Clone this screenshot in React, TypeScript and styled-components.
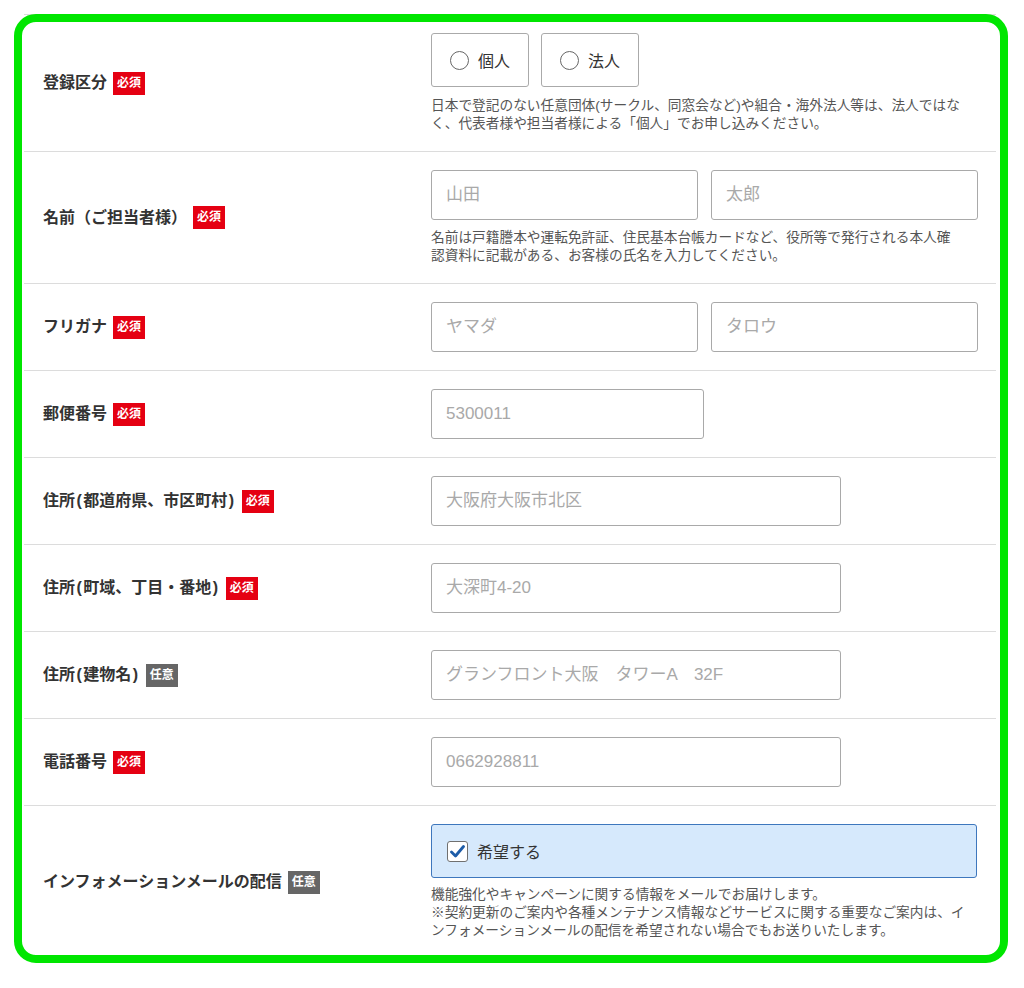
import React from "react";
import styled, { createGlobalStyle } from "styled-components";

const FONT = `"Liberation Sans", "Noto Sans CJK JP", "Noto Sans", sans-serif`;

const Global = createGlobalStyle`
  html, body { margin: 0; padding: 0; background: #fff; }
  body { font-family: ${FONT}; color: #333; }
  * { box-sizing: border-box; }
`;

const Page = styled.div`
  position: relative;
  width: 1024px;
  height: 988px;
  padding: 14px 28px 0 24px;
`;

const Frame = styled.div`
  position: absolute;
  left: 14px;
  top: 14px;
  width: 994px;
  height: 949px;
  border: 8px solid #00e600;
  border-radius: 22px;
  pointer-events: none;
`;

const Table = styled.div`
  width: 972px;
  border-top: 1px solid #dcdcdc;
`;

const Row = styled.div`
  display: grid;
  grid-template-columns: 387px 1fr;
  border-bottom: 1px solid #dcdcdc;
`;

const LabelCell = styled.div`
  display: flex;
  align-items: center;
  gap: 6px;
  padding-left: 19px;
  font-size: 16px;
  font-weight: 700;
  color: #333;
  line-height: 22px;
`;

const Paren = styled.span`
  margin: 0 1.5px;
`;

const Badge = styled.span<{ $optional?: boolean }>`
  display: inline-block;
  background: ${(p) => (p.$optional ? "#666" : "#e50012")};
  color: #fff;
  font-size: 12px;
  font-weight: 700;
  line-height: 15px;
  padding: 4px 4px;
`;

const ValueCell = styled.div<{ $gap?: number }>`
  padding: 18px 19px 18px 20px;
  display: flex;
  flex-direction: column;
  gap: ${(p) => p.$gap ?? 9}px;
`;

const Inline = styled.div`
  display: flex;
  gap: 12px;
`;

const RadioBox = styled.label`
  width: 98px;
  height: 54px;
  border: 1px solid #aaa;
  border-radius: 3px;
  display: flex;
  align-items: center;
  gap: 9px;
  padding-left: 18px;
  font-size: 16px;
  color: #333;
`;

const RadioCircle = styled.span`
  width: 19px;
  height: 19px;
  border-radius: 50%;
  border: 1px solid #666;
  background: #fff;
`;

const Input = styled.input<{ $w: number }>`
  width: ${(p) => p.$w}px;
  height: 50px;
  border: 1px solid #a9a9a9;
  border-radius: 3px;
  padding: 0 14px;
  font-family: ${FONT};
  font-size: 17px;
  color: #333;
  outline: none;
  &::placeholder { color: #a9a9a9; }
`;

const InputRow = styled.div`
  display: flex;
  gap: 13px;
`;

const Help = styled.p`
  margin: 0;
  font-size: 13.7px;
  line-height: 18px;
  color: #555;
  white-space: nowrap;
`;

const CheckBox = styled.label`
  width: 546px;
  height: 54px;
  border: 1px solid #3e77bd;
  border-radius: 3px;
  background: #d6e9fc;
  display: flex;
  align-items: center;
  gap: 9px;
  padding-left: 15px;
  font-size: 16px;
  color: #333;
`;

const CheckSquare = styled.span`
  width: 21px;
  height: 21px;
  border: 1px solid #707070;
  border-radius: 3px;
  background: #fff;
  display: flex;
  align-items: center;
  justify-content: center;
`;

const Required = () => <Badge>必須</Badge>;
const Optional = () => <Badge $optional>任意</Badge>;

export default function App() {
  return (
    <Page>
      <Global />
      <Table>
        <Row>
          <LabelCell>登録区分<Required /></LabelCell>
          <ValueCell $gap={10}>
            <Inline>
              <RadioBox><RadioCircle />個人</RadioBox>
              <RadioBox><RadioCircle />法人</RadioBox>
            </Inline>
            <Help>
              日本で登記のない任意団体(サークル、同窓会など)や組合・海外法人等は、法人ではな<br />
              く、代表者様や担当者様による「個人」でお申し込みください。
            </Help>
          </ValueCell>
        </Row>
        <Row>
          <LabelCell>名前（ご担当者様）<Required /></LabelCell>
          <ValueCell>
            <InputRow>
              <Input $w={267} placeholder="山田" />
              <Input $w={267} placeholder="太郎" />
            </InputRow>
            <Help>
              名前は戸籍謄本や運転免許証、住民基本台帳カードなど、役所等で発行される本人確<br />
              認資料に記載がある、お客様の氏名を入力してください。
            </Help>
          </ValueCell>
        </Row>
        <Row>
          <LabelCell>フリガナ<Required /></LabelCell>
          <ValueCell>
            <InputRow>
              <Input $w={267} placeholder="ヤマダ" />
              <Input $w={267} placeholder="タロウ" />
            </InputRow>
          </ValueCell>
        </Row>
        <Row>
          <LabelCell>郵便番号<Required /></LabelCell>
          <ValueCell>
            <Input $w={273} placeholder="5300011" />
          </ValueCell>
        </Row>
        <Row>
          <LabelCell><span>住所<Paren>(</Paren>都道府県、市区町村<Paren>)</Paren></span><Required /></LabelCell>
          <ValueCell>
            <Input $w={410} placeholder="大阪府大阪市北区" />
          </ValueCell>
        </Row>
        <Row>
          <LabelCell><span>住所<Paren>(</Paren>町域、丁目・番地<Paren>)</Paren></span><Required /></LabelCell>
          <ValueCell>
            <Input $w={410} placeholder="大深町4-20" />
          </ValueCell>
        </Row>
        <Row>
          <LabelCell><span>住所<Paren>(</Paren>建物名<Paren>)</Paren></span><Optional /></LabelCell>
          <ValueCell>
            <Input $w={410} placeholder="グランフロント大阪　タワーA　32F" />
          </ValueCell>
        </Row>
        <Row>
          <LabelCell>電話番号<Required /></LabelCell>
          <ValueCell>
            <Input $w={410} placeholder="0662928811" />
          </ValueCell>
        </Row>
        <Row>
          <LabelCell>インフォメーションメールの配信<Optional /></LabelCell>
          <ValueCell $gap={8}>
            <CheckBox>
              <CheckSquare>
                <svg width="15" height="13" viewBox="0 0 15 13">
                  <path d="M1.5 7 L5.5 11 L13.5 1.5" fill="none" stroke="#1d5ca8" strokeWidth="2.8" strokeLinecap="round" strokeLinejoin="round" />
                </svg>
              </CheckSquare>
              希望する
            </CheckBox>
            <Help>
              機能強化やキャンペーンに関する情報をメールでお届けします。<br />
              ※契約更新のご案内や各種メンテナンス情報などサービスに関する重要なご案内は、イ<br />
              ンフォメーションメールの配信を希望されない場合でもお送りいたします。
            </Help>
          </ValueCell>
        </Row>
      </Table>
      <Frame />
    </Page>
  );
}
